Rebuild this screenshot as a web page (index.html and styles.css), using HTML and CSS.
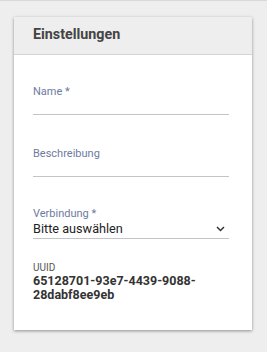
FILE: index.html
```html
<!DOCTYPE html>
<html lang="de">
<head>
    <meta charset="UTF-8">
    <title>Einstellungen</title>
    <link rel="stylesheet" href="styles.css">
</head>
<body>
    <div class="page">
        <div class="card">
            <div class="card-header">Einstellungen</div>
            <div class="card-body">
                <div class="field">
                    <label class="field-label">Name *</label>
                    <div class="field-input"></div>
                </div>
                <div class="field">
                    <label class="field-label">Beschreibung</label>
                    <div class="field-input"></div>
                </div>
                <div class="field field-select">
                    <label class="field-label">Verbindung *</label>
                    <div class="field-input select-input">
                        <span>Bitte auswählen</span>
                        <svg class="chevron" width="9" height="6" viewBox="0 0 9 6">
                            <path d="M1 1 L4.5 4.5 L8 1" fill="none" stroke="#333" stroke-width="1.5"/>
                        </svg>
                    </div>
                </div>
                <div class="info">
                    <div class="info-label">UUID</div>
                    <div class="info-value">65128701-93e7-4439-9088-<wbr>28dabf8ee9eb</div>
                </div>
            </div>
        </div>
    </div>
</body>
</html>
```
FILE: styles.css
```css
html, body {margin: 0; padding: 0;}
body {
    background: #eeeeee;
    font-family: Roboto, "Liberation Sans", sans-serif;
    border-top: 1px solid #d8d8d8;
}

.page {
    padding: 16px 15px 20px 14px;
}

.card {
    width: 238px;
    background: #fff;
    box-shadow: 0 1px 3px rgba(0,0,0,0.4);
}

.card-header {
    background: #eeeeee;
    border-bottom: 1px solid #d4d4d4;
    height: 37px;
    line-height: 35px;
    padding-left: 19px;
    font-size: 14.3px;
    font-weight: 700;
    color: #444;
}

.card-body {
    padding: 30px 23px 28px 19px;
}

.field {
    margin-bottom: 32px;
}

.field-label {
    display: block;
    font-size: 11px;
    color: #6d7ba0;
    line-height: 13px;
}

.field-input {
    height: 16px;
    border-bottom: 1px solid #c4c4c4;
}

.field-select {
    margin-top: -2px;
    margin-bottom: 23px;
}

.select-input {
    display: flex;
    align-items: flex-start;
    justify-content: space-between;
    font-size: 12.7px;
    line-height: 14px;
    color: #222;
    padding: 2px 4px 0 0;
}

.chevron {
    margin-top: 4px;
}

.info-label {
    font-size: 10px;
    color: #555;
    line-height: 12px;
}

.info-value {
    font-size: 12.5px;
    font-weight: 700;
    color: #333;
    line-height: 14px;
}
```
